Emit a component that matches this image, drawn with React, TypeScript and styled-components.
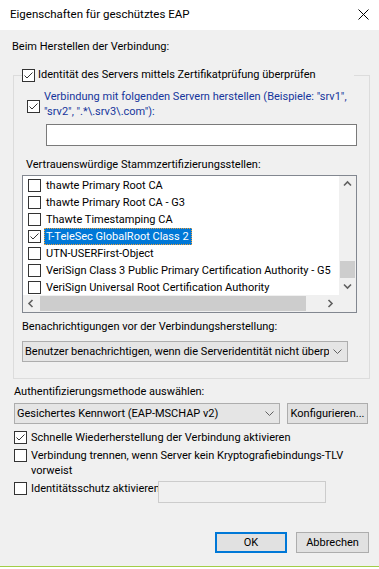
import React from "react";
import styled, { createGlobalStyle } from "styled-components";

const GlobalStyle = createGlobalStyle`
  html, body {
    margin: 0;
    padding: 0;
    background: #ffffff;
  }
  body {
    font-family: Roboto, "Segoe UI", "Liberation Sans", sans-serif;
    font-size: 11px;
    color: #000000;
  }
  * {
    box-sizing: border-box;
  }
`;

const Window = styled.div`
  width: 379px;
  height: 569px;
  display: flex;
  flex-direction: column;
  background: #ffffff;
`;

const TitleBar = styled.header`
  height: 30px;
  flex: none;
  display: flex;
  align-items: center;
  justify-content: space-between;
  padding: 0 10px 2px 10px;
  background: #ffffff;
  font-size: 11.5px;
`;

const Body = styled.main`
  flex: 1;
  display: flex;
  flex-direction: column;
  background: #f0f0f0;
  padding: 9px 10px 0 12px;
  border-bottom: 1px solid #a3cd45;
  margin-bottom: 2px;
`;

const Label = styled.div<{ $top?: number; $indent?: number }>`
  line-height: 16px;
  white-space: nowrap;
  margin-top: ${(p) => p.$top ?? 0}px;
  margin-left: ${(p) => p.$indent ?? 0}px;
`;

const Group = styled.fieldset`
  margin: 12px 0 0 1px;
  width: 357px;
  min-width: 0;
  padding: 0 12px 16px 8px;
  border: 1px solid #dcdcdc;
  display: flex;
  flex-direction: column;
`;

const GroupLegend = styled.legend`
  padding: 0;
  width: 332px;
  display: flex;
  align-items: center;
  gap: 3px;
  line-height: 16px;
  white-space: nowrap;
`;

const Box = styled.span<{ $offset?: number }>`
  flex: none;
  width: 13px;
  height: 13px;
  margin-top: ${(p) => p.$offset ?? 0}px;
  border: 1px solid #333333;
  background: #ffffff;
  display: inline-flex;
  align-items: center;
  justify-content: center;
`;

const CheckBox: React.FC<{ checked?: boolean; offset?: number }> = ({ checked, offset }) => (
  <Box $offset={offset}>
    {checked && (
      <svg width="11" height="11" viewBox="0 0 11 11">
        <path d="M1.5 5.5 L4 8 L9.5 2.5" fill="none" stroke="#333333" strokeWidth="1" />
      </svg>
    )}
  </Box>
);

const CheckRow = styled.div<{ $top?: number; $indent?: number; $blue?: boolean }>`
  display: flex;
  align-items: flex-start;
  gap: 4px;
  margin-top: ${(p) => p.$top ?? 0}px;
  margin-left: ${(p) => p.$indent ?? 0}px;
  line-height: 15px;
  color: ${(p) => (p.$blue ? "#16369c" : "#000000")};
`;

const TextInput = styled.div<{ $top?: number; $indent?: number; $width: number; $disabled?: boolean }>`
  flex: none;
  width: ${(p) => p.$width}px;
  height: 22px;
  margin-top: ${(p) => p.$top ?? 0}px;
  margin-left: ${(p) => p.$indent ?? 0}px;
  background: ${(p) => (p.$disabled ? "#f0f0f0" : "#ffffff")};
  border: 1px solid ${(p) => (p.$disabled ? "#cccccc" : "#7a7a7a")};
`;

const ListBox = styled.div`
  margin-top: 2px;
  width: 335px;
  height: 138px;
  border: 1px solid #828790;
  background: #ffffff;
  display: grid;
  grid-template-columns: 1fr 17px;
  grid-template-rows: 1fr 17px;
`;

const Items = styled.div`
  overflow: hidden;
  padding-top: 1px;
`;

const Item = styled.div`
  height: 17px;
  display: flex;
  align-items: center;
  gap: 3px;
  padding-left: 5px;
  white-space: nowrap;
`;

const ItemText = styled.span<{ $selected?: boolean }>`
  height: 17px;
  line-height: 15px;
  padding: 0 2px 0 1px;
  border: 1px dotted ${(p) => (p.$selected ? "#e8a040" : "transparent")};
  background: ${(p) => (p.$selected ? "#0078d7" : "transparent")};
  color: ${(p) => (p.$selected ? "#ffffff" : "#000000")};
`;

const VScroll = styled.div`
  background: #f0f0f0;
  display: flex;
  flex-direction: column;
`;

const HScroll = styled.div`
  background: #f0f0f0;
  display: flex;
`;

const Corner = styled.div`
  background: #f0f0f0;
`;

const Arrow = styled.div`
  flex: none;
  width: 17px;
  height: 17px;
  display: flex;
  align-items: center;
  justify-content: center;
`;

const Track = styled.div<{ $vertical?: boolean }>`
  flex: 1;
  display: flex;
  flex-direction: ${(p) => (p.$vertical ? "column" : "row")};
  justify-content: ${(p) => (p.$vertical ? "flex-end" : "flex-start")};
`;

const Thumb = styled.div<{ $vertical?: boolean }>`
  background: #cdcdcd;
  ${(p) => (p.$vertical ? "height: 17px; margin: 0 1px;" : "width: 266px; margin: 1px 0;")}
`;

const Combo = styled.div<{ $top?: number; $indent?: number; $width: number }>`
  flex: none;
  width: ${(p) => p.$width}px;
  height: 21px;
  margin-top: ${(p) => p.$top ?? 0}px;
  margin-left: ${(p) => p.$indent ?? 0}px;
  background: #e5e5e5;
  border: 1px solid #adadad;
  display: flex;
  align-items: center;
  padding: 0 5px 0 2px;
  gap: 4px;
`;

const ComboText = styled.span`
  flex: 1;
  overflow: hidden;
  white-space: nowrap;
  line-height: 16px;
`;

const Row = styled.div<{ $top?: number; $indent?: number }>`
  display: flex;
  gap: 7px;
  margin-top: ${(p) => p.$top ?? 0}px;
  margin-left: ${(p) => p.$indent ?? 0}px;
`;

const Button = styled.button<{ $width: number; $primary?: boolean }>`
  width: ${(p) => p.$width}px;
  height: 21px;
  padding: 0;
  font: inherit;
  color: #000000;
  background: #e1e1e1;
  border: ${(p) => (p.$primary ? "2px solid #0078d7" : "1px solid #adadad")};
`;

const Footer = styled.div`
  display: flex;
  justify-content: flex-end;
  gap: 9px;
  margin-top: 29px;
`;

const ShieldLabel = styled.span`
  width: 127px;
  white-space: nowrap;
`;

const Chevron = () => (
  <svg width="9" height="5" viewBox="0 0 9 5">
    <path d="M0.5 0.5 L4.5 4.5 L8.5 0.5" fill="none" stroke="#606060" strokeWidth="1" />
  </svg>
);

const ScrollArrow: React.FC<{ dir: "up" | "down" | "left" | "right" }> = ({ dir }) => {
  const paths = {
    up: "M1 5.5 L4.5 2 L8 5.5",
    down: "M1 2.5 L4.5 6 L8 2.5",
    left: "M5.5 1 L2 4.5 L5.5 8",
    right: "M2.5 1 L6 4.5 L2.5 8",
  };
  return (
    <Arrow>
      <svg width="9" height="9" viewBox="0 0 9 9">
        <path d={paths[dir]} fill="none" stroke="#606060" strokeWidth="1.6" />
      </svg>
    </Arrow>
  );
};

const certificates = [
  { name: "thawte Primary Root CA", checked: false },
  { name: "thawte Primary Root CA - G3", checked: false },
  { name: "Thawte Timestamping CA", checked: false },
  { name: "T-TeleSec GlobalRoot Class 2", checked: true, selected: true },
  { name: "UTN-USERFirst-Object", checked: false },
  { name: "VeriSign Class 3 Public Primary Certification Authority - G5", checked: false },
  { name: "VeriSign Universal Root Certification Authority", checked: false },
];

const App: React.FC = () => {
  return (
    <Window>
      <GlobalStyle />
      <TitleBar>
        <span>Eigenschaften für geschütztes EAP</span>
        <svg width="11" height="11" viewBox="0 0 11 11">
          <path d="M0.5 0.5 L10.5 10.5 M10.5 0.5 L0.5 10.5" stroke="#000000" strokeWidth="1" />
        </svg>
      </TitleBar>
      <Body>
        <Label>Beim Herstellen der Verbindung:</Label>
        <Group>
          <GroupLegend>
            <CheckBox checked />
            <span>Identität des Servers mittels Zertifikatprüfung überprüfen</span>
          </GroupLegend>
          <CheckRow $top={6} $indent={5} $blue>
            <CheckBox checked offset={11} />
            <span>
              Verbindung mit folgenden Servern herstellen (Beispiele: "srv1",
              <br />
              "srv2", ".*\.srv3\.com"):
            </span>
          </CheckRow>
          <TextInput $top={5} $indent={24} $width={311} />
          <Label $top={11} $indent={4}>
            Vertrauenswürdige Stammzertifizierungsstellen:
          </Label>
          <ListBox>
            <Items>
              {certificates.map((c) => (
                <Item key={c.name}>
                  <CheckBox checked={c.checked} />
                  <ItemText $selected={c.selected}>{c.name}</ItemText>
                </Item>
              ))}
            </Items>
            <VScroll>
              <ScrollArrow dir="up" />
              <Track $vertical>
                <Thumb $vertical />
              </Track>
              <ScrollArrow dir="down" />
            </VScroll>
            <HScroll>
              <ScrollArrow dir="left" />
              <Track>
                <Thumb />
              </Track>
              <ScrollArrow dir="right" />
            </HScroll>
            <Corner />
          </ListBox>
          <Label $top={6}>Benachrichtigungen vor der Verbindungsherstellung:</Label>
          <Combo $top={6} $width={326}>
            <ComboText>Benutzer benachrichtigen, wenn die Serveridentität nicht überprüft werden kann</ComboText>
            <Chevron />
          </Combo>
        </Group>
        <Label $top={5} $indent={2}>
          Authentifizierungsmethode auswählen:
        </Label>
        <Row $top={3} $indent={2}>
          <Combo $width={266}>
            <ComboText>Gesichertes Kennwort (EAP-MSCHAP v2)</ComboText>
            <Chevron />
          </Combo>
          <Button $width={81}>Konfigurieren...</Button>
        </Row>
        <CheckRow $top={6} $indent={2}>
          <CheckBox checked offset={1} />
          <span>Schnelle Wiederherstellung der Verbindung aktivieren</span>
        </CheckRow>
        <CheckRow $top={3} $indent={2}>
          <CheckBox offset={1} />
          <span>
            Verbindung trennen, wenn Server kein Kryptografiebindungs-TLV
            <br />
            vorweist
          </span>
        </CheckRow>
        <CheckRow $top={3} $indent={2}>
          <CheckBox offset={1} />
          <ShieldLabel>Identitätsschutz aktivieren</ShieldLabel>
          <TextInput $width={168} $disabled style={{ marginLeft: -4 }} />
        </CheckRow>
        <Footer>
          <Button $width={72} $primary>
            OK
          </Button>
          <Button $width={73}>Abbrechen</Button>
        </Footer>
      </Body>
    </Window>
  );
};

export default App;
